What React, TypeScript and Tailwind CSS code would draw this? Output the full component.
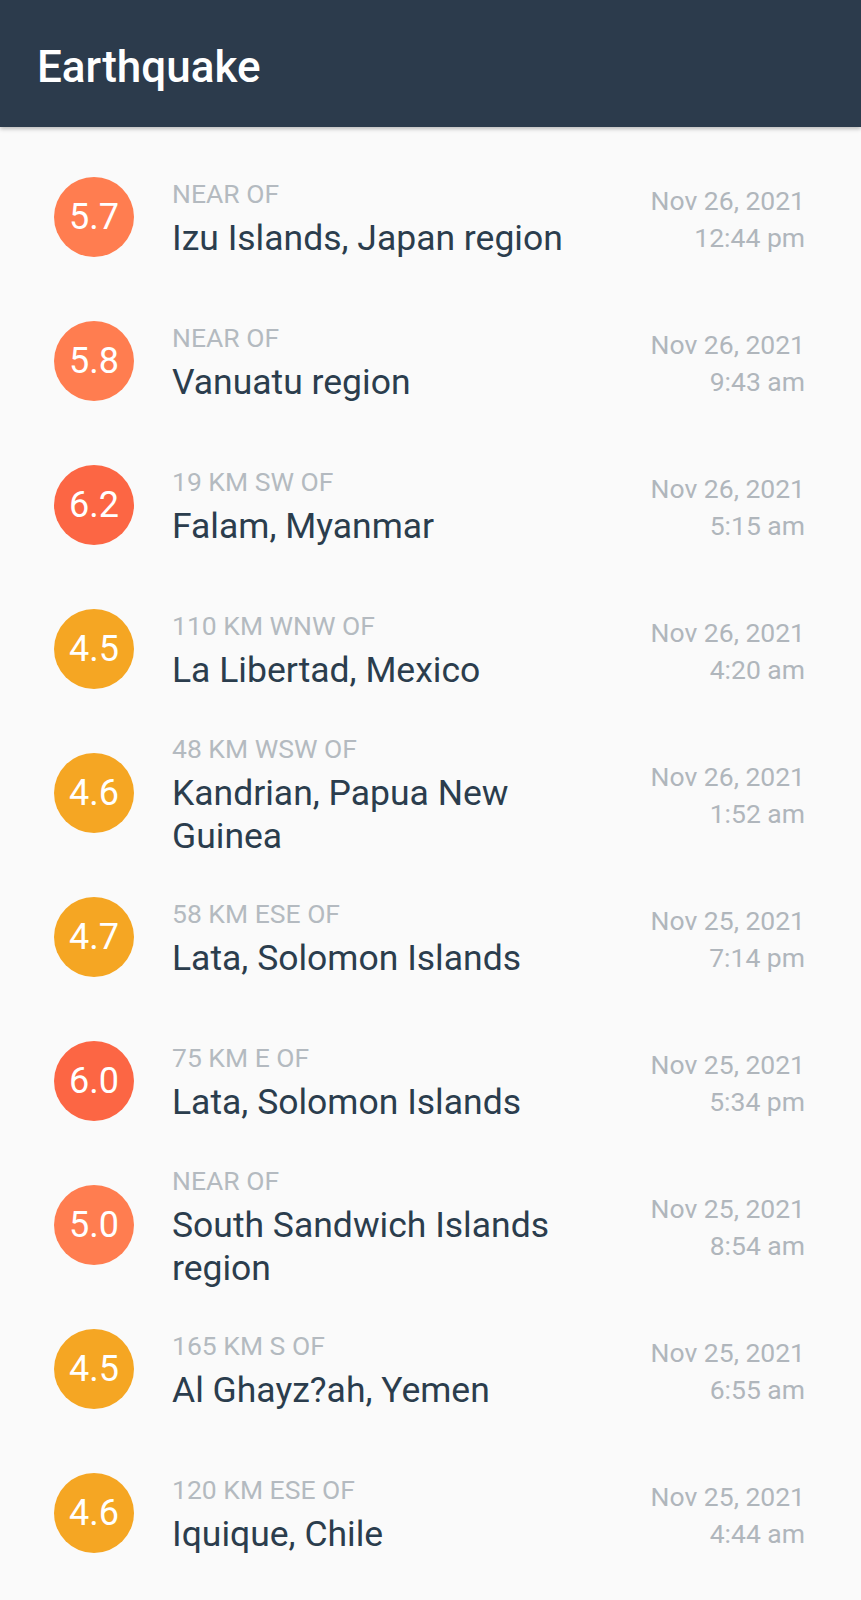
import React from "react";

type Quake = {
  mag: string;
  offset: string;
  place: string;
  date: string;
  time: string;
};

const QUAKES: Quake[] = [
  { mag: "5.7", offset: "Near of", place: "Izu Islands, Japan region", date: "Nov 26, 2021", time: "12:44 pm" },
  { mag: "5.8", offset: "Near of", place: "Vanuatu region", date: "Nov 26, 2021", time: "9:43 am" },
  { mag: "6.2", offset: "19 km SW of", place: "Falam, Myanmar", date: "Nov 26, 2021", time: "5:15 am" },
  { mag: "4.5", offset: "110 km WNW of", place: "La Libertad, Mexico", date: "Nov 26, 2021", time: "4:20 am" },
  { mag: "4.6", offset: "48 km WSW of", place: "Kandrian, Papua New Guinea", date: "Nov 26, 2021", time: "1:52 am" },
  { mag: "4.7", offset: "58 km ESE of", place: "Lata, Solomon Islands", date: "Nov 25, 2021", time: "7:14 pm" },
  { mag: "6.0", offset: "75 km E of", place: "Lata, Solomon Islands", date: "Nov 25, 2021", time: "5:34 pm" },
  { mag: "5.0", offset: "Near of", place: "South Sandwich Islands region", date: "Nov 25, 2021", time: "8:54 am" },
  { mag: "4.5", offset: "165 km S of", place: "Al Ghayz?ah, Yemen", date: "Nov 25, 2021", time: "6:55 am" },
  { mag: "4.6", offset: "120 km ESE of", place: "Iquique, Chile", date: "Nov 25, 2021", time: "4:44 am" },
];

// magnitude -> circle colour
const magClass = (mag: string) => {
  const m = Math.floor(parseFloat(mag));
  if (m >= 6) return "bg-[#fc6644]";
  if (m === 5) return "bg-[#ff7d50]";
  return "bg-[#f5a623]";
};

const QuakeRow = ({ q }: { q: Quake }) => (
  <li className="flex items-center h-[144px] pl-[54px] pr-[56px]">
    <div
      className={`${magClass(q.mag)} w-[80px] h-[80px] rounded-full flex items-center justify-center shrink-0 text-white text-[36px]`}
    >
      {q.mag}
    </div>
    <div className="w-[420px] ml-[38px] pt-[5px]">
      <div className="text-[26.5px] leading-[30px] uppercase text-[#b4bac0]">{q.offset}</div>
      <div className="mt-[8px] text-[35.5px] leading-[43px] text-[#2b3d4d]">{q.place}</div>
    </div>
    <div className="flex-1 text-right text-[26.5px] leading-[37px] text-[#b0b6bc] pt-[4px]">
      <div>{q.date}</div>
      <div>{q.time}</div>
    </div>
  </li>
);

export default function App() {
  return (
    <div className="min-h-screen bg-[#fafafa] font-['Roboto',sans-serif]">
      <header className="h-[127px] bg-[#2c3b4c] flex items-center pl-[37px] pt-[6px] shadow-[0_2px_4px_rgba(0,0,0,0.25)] relative z-10">
        <h1 className="text-white text-[44px] font-medium">Earthquake</h1>
      </header>
      <ul className="pt-[18px]">
        {QUAKES.map((q, i) => (
          <QuakeRow key={i} q={q} />
        ))}
      </ul>
    </div>
  );
}
